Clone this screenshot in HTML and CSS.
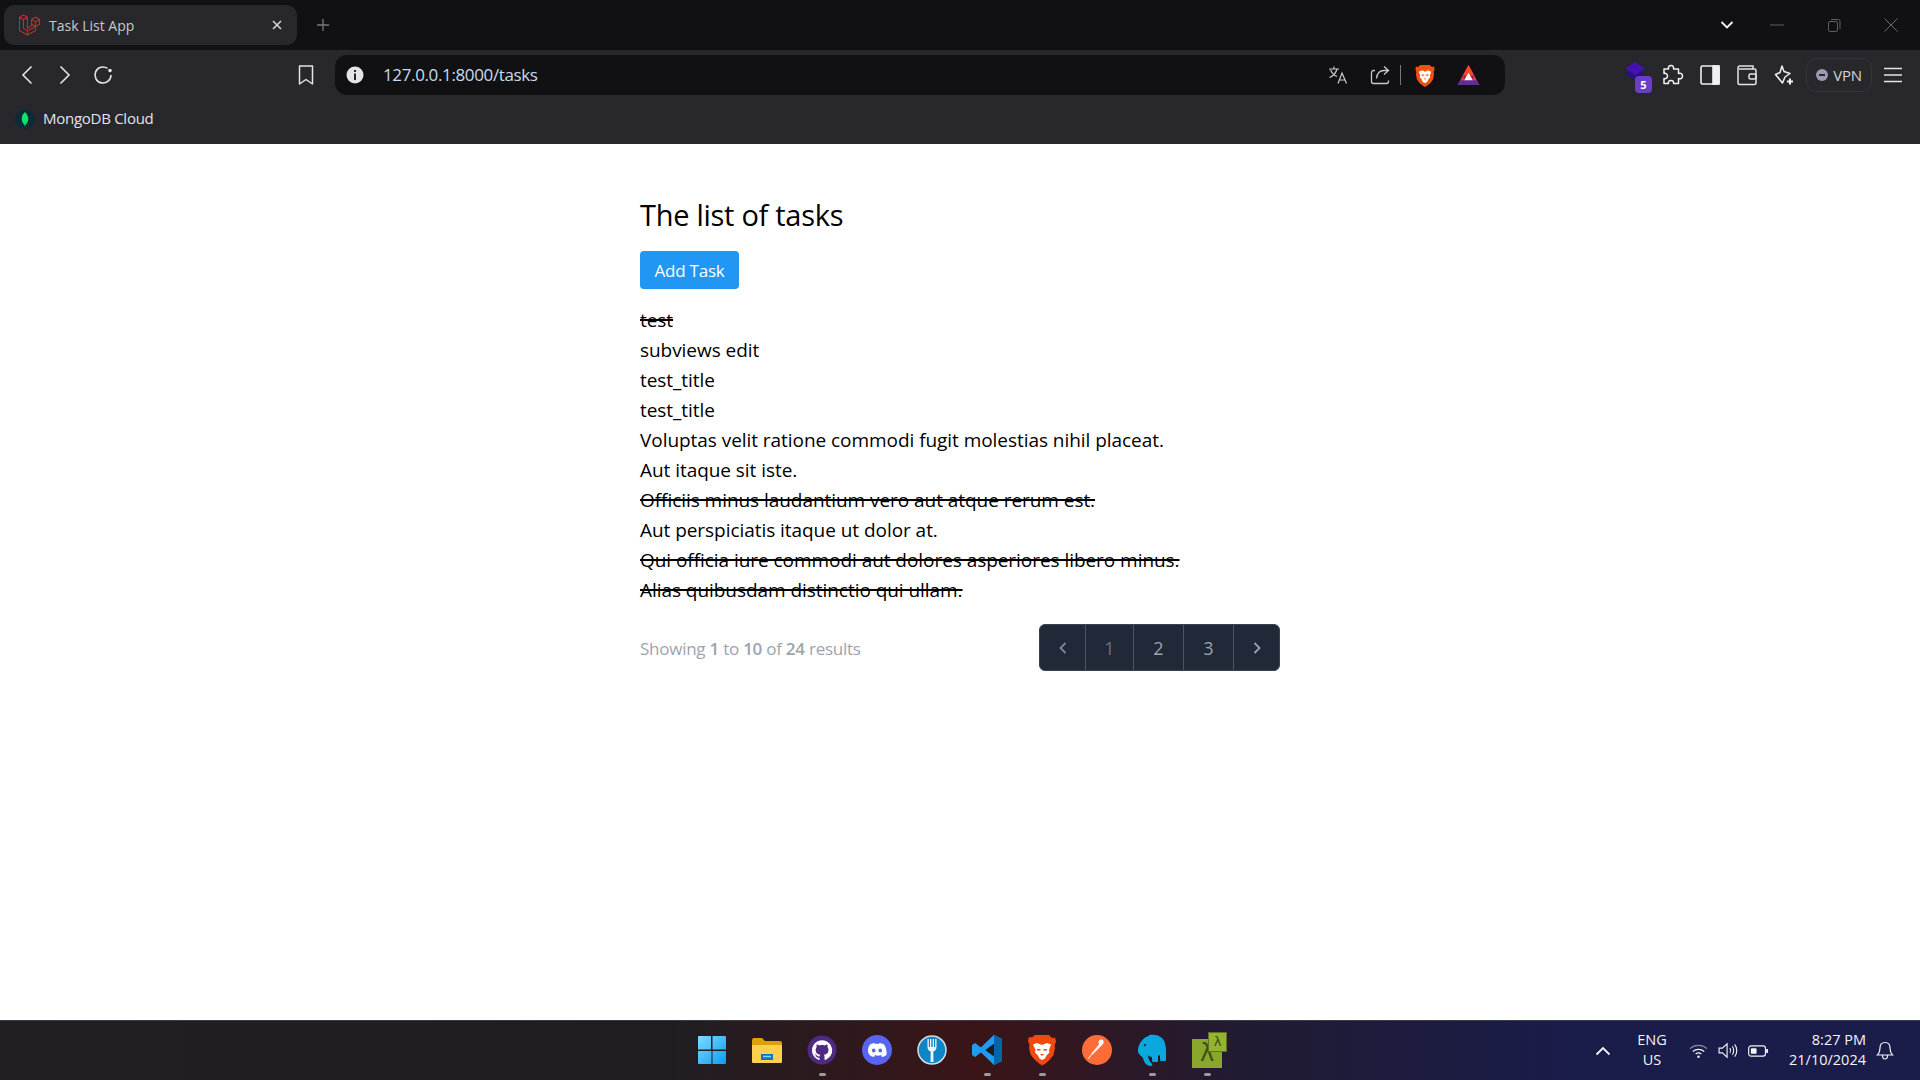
FILE: index.html
```html
<!DOCTYPE html>
<html lang="en">
<head>
    <meta charset="UTF-8">
    <meta name="viewport" content="width=device-width, initial-scale=1.0">
    <title>Task List App</title>
    <link rel="stylesheet" href="styles.css">
</head>
<body>
    <!-- Browser tabs -->
    <div class="tabstrip">
        <div class="tab">
            <svg class="favicon" viewBox="0 0 50 50" fill="none" stroke="#b8342b" stroke-width="2.6" stroke-linejoin="round">
                <path d="M1 6.5 10.500 1 20 6.500V32l10-5.500V12l9.500-5.500L49 12v11l-9.500 5.500V38L20 49 1 38zM1 6.500 10.500 12 20 6.500M10.500 12v21l9.500 5.500 19.500-10M20 38.500V49M30 12l9.500 5.500L49 12M39.500 17.500v11L30 23"/>
            </svg>
            <span class="tab-title">Task List App</span>
            <svg class="tab-close" viewBox="0 0 12 12" fill="none" stroke="#d4d4d8" stroke-width="1.6"><path d="M2 2l8 8M10 2l-8 8"/></svg>
        </div>
        <svg class="new-tab" viewBox="0 0 14 14" fill="none" stroke="#77777f" stroke-width="1.3"><path d="M7 1v12M1 7h12"/></svg>
        <div class="window-controls">
            <svg class="tab-list" viewBox="0 0 14 10" fill="none" stroke="#f4f4f5" stroke-width="1.8"><path d="M1.5 2 7 7.500 12.500 2"/></svg>
            <svg class="win-btn" viewBox="0 0 14 14" fill="none" stroke="#5c5c63"><path d="M0 7h14"/></svg>
            <svg class="win-btn" viewBox="0 0 14 14" fill="none" stroke="#5c5c63"><rect x="1.5" y="3.5" width="9" height="10" rx="1.5"/><path d="M4 1.500h7.500a1.500 1.500 0 0 1 1.500 1.500v8"/></svg>
            <svg class="win-btn" viewBox="0 0 14 14" fill="none" stroke="#6a6a71"><path d="M.5.5l13 13M13.500.5l-13 13"/></svg>
        </div>
    </div>

    <!-- Address bar -->
    <div class="toolbar">
        <div class="nav-btn"><svg class="icon" viewBox="0 0 20 20" fill="none" stroke="#e4e4e7" stroke-width="1.6"><path d="M14.500 1.500 6 10l8.500 8.500"/></svg></div>
        <div class="nav-btn"><svg class="icon" viewBox="0 0 20 20" fill="none" stroke="#e4e4e7" stroke-width="1.6"><path d="M5.500 1.500 14 10l-8.500 8.500"/></svg></div>
        <div class="nav-btn"><svg class="icon" viewBox="0 0 20 20" fill="none" stroke="#e4e4e7" stroke-width="1.6"><path d="M18 10a8 8 0 1 1-3.500-6.600"/><circle cx="17" cy="5.500" r="1.800" fill="#e4e4e7" stroke="none"/></svg></div>
        <svg class="bookmark" viewBox="0 0 16 20" fill="none" stroke="#e4e4e7" stroke-width="1.5"><path d="M1.500 1h13v18L8 14.500 1.500 19z" stroke-linejoin="round"/></svg>
        <div class="omnibox">
            <svg class="info" viewBox="0 0 18 18"><circle cx="9" cy="9" r="8.5" fill="#e4e4e7"/><path d="M8 4h2v2H8zM8 7.500h2V14H8z" fill="#26262b"/></svg>
            <span class="url">127.0.0.1:8000/tasks</span>
            <div class="omni-icons">
                <svg class="translate" viewBox="0 0 20 20" fill="none" stroke="#c9c9ce" stroke-width="1.2"><path d="M1 4h10M6 1.500V4M9 4c-1 4-4 7-7.500 8.500M2.500 5c1.500 3 4 5.500 6.500 6.500M10 18.500 14 8l4.500 10.500M11.500 15H17"/></svg>
                <svg class="share" viewBox="0 0 20 20" fill="none" stroke="#c9c9ce" stroke-width="1.3"><path d="M14 1.500l4.500 4-4.500 4M18 5.500h-4c-5 0-7 3.500-7.500 8M5 5.500H3.500a2 2 0 0 0-2 2v9a2 2 0 0 0 2 2h13a2 2 0 0 0 2-2v-1"/></svg>
                <span class="omni-sep"></span>
                <svg class="brave" viewBox="0 0 20 24"><path d="M5 1h10l2 2 2.500-.5.500 3-1 3 .5 2-1 5.500-3 4-3 2.500-2.500 1.500-2.500-1.500-3-2.500-3-4-1-5.500.5-2-1-3 .5-3L3 3z" fill="#f1500f"/><path d="M3.500 8 7 6.500l3 1.500 3-1.500L16.500 8 15 12l.5 2-2 2-1 2.500-2.500 1.500-2.500-1.500-1-2.500-2-2 .5-2z" fill="#fff"/><path d="M6.500 11h2.500v1.200H6.500zM11 11h2.500v1.200H11zM8.500 15h3L10 16.500z" fill="#f1500f"/></svg>
                <svg class="bat" viewBox="0 0 24 22"><path d="M12 0l11.500 21H.5z" fill="#9e1f63"/><path d="M12 0l6 11H6z" fill="#ff4724"/><path d="M6 11 .5 21h23L18 11l-1.500 4h-9z" fill="#662d91"/><path d="M12 8l4.500 8h-9z" fill="#fff"/><path d="M6 11l1.500 5H4zM18 11l-1.500 5H20z" fill="#e8442b"/></svg>
            </div>
        </div>
        <div class="toolbar-right">
            <div class="stack-ext">
                <svg class="stack" viewBox="0 0 22 22"><path d="M11 6l10 6-10 7-10-7z" fill="#27137a"/><path d="M11 0l10 6.500-10 7-10-7z" fill="#4412b0"/></svg>
                <span class="ext-badge">5</span>
            </div>
            <svg class="tool-icon" viewBox="0 0 22 22" fill="none" stroke="#f0f0f2" stroke-width="1.5" stroke-linejoin="round"><path d="M9 1.500c2 0 3 1.500 2.500 3.500h5v4.500c2.500-1 4 .5 4 2.500s-1.500 3.500-4 2.500v5h-5c.5-2-.5-3-2.500-3s-3 1-2.500 3H2v-5c2 .5 3.500-.5 3.500-2.500S4 9 2 9.500V5h4.500C6 3 7 1.500 9 1.500z"/></svg>
            <svg class="tool-icon" viewBox="0 0 22 22" fill="none" stroke="#f0f0f2" stroke-width="1.6"><rect x="2" y="2" width="18" height="18" rx="1.5"/><rect x="14" y="2" width="6" height="18" fill="#f0f0f2"/></svg>
            <svg class="tool-icon" viewBox="0 0 22 22" fill="none" stroke="#e4e4e7" stroke-width="1.5"><path d="M17 5V2H4a2 2 0 0 0-2 2v15a1.500 1.500 0 0 0 1.500 1.500h15A1.500 1.500 0 0 0 20 19V6.500A1.500 1.500 0 0 0 18.500 5H3"/><rect x="13" y="10" width="7" height="5" rx="1.5"/></svg>
            <svg class="tool-icon leo" viewBox="0 0 22 22"><path d="M9 2l2 5.500 6 2-5 3.500-2.500 6-7-8.500 4.500-2z" fill="none" stroke="#f0f0f2" stroke-width="1.5" stroke-linejoin="round"/><path d="M16 14.500h2v2h2v2h-2v2h-2v-2h-2v-2h2z" fill="#f0f0f2"/></svg>
            <div class="vpn">
                <span class="vpn-dot"></span>
                <span>VPN</span>
            </div>
            <svg class="menu-icon" viewBox="0 0 20 16" fill="none" stroke="#e4e4e7" stroke-width="1.5"><path d="M1 1.500h18M1 8h18M1 14.500h18"/></svg>
        </div>
    </div>

    <!-- Bookmarks -->
    <div class="bookmarks">
        <span class="mongo-icon">
            <svg viewBox="0 0 8 16"><path d="M4 0c2 2 3.500 4.500 3.500 7.500S5.500 13 4.500 13.500L4 16l-.5-2.500C2.500 13 .5 11 .5 7.500S2 2 4 0z" fill="#13e26a"/></svg>
        </span>
        <span class="bookmark-label">MongoDB Cloud</span>
    </div>

    <!-- Page -->
    <main class="page">
        <div class="content">
            <h1>The list of tasks</h1>
            <a class="add-task">Add Task</a>
            <ul class="task-list">
                <li class="done">test</li>
                <li>subviews edit</li>
                <li>test_title</li>
                <li>test_title</li>
                <li>Voluptas velit ratione commodi fugit molestias nihil placeat.</li>
                <li>Aut itaque sit iste.</li>
                <li class="done">Officiis minus laudantium vero aut atque rerum est.</li>
                <li>Aut perspiciatis itaque ut dolor at.</li>
                <li class="done">Qui officia iure commodi aut dolores asperiores libero minus.</li>
                <li class="done">Alias quibusdam distinctio qui ullam.</li>
            </ul>
            <div class="pager">
                <p class="summary">Showing <b>1</b> to <b>10</b> of <b>24</b> results</p>
                <div class="pages">
                    <span class="page-link arrow-prev"><svg class="chev" viewBox="0 0 10 14" fill="none" stroke="#7d8694" stroke-width="1.8"><path d="M7.500 2l-5 5 5 5"/></svg></span>
                    <span class="page-link current">1</span>
                    <span class="page-link num-2">2</span>
                    <span class="page-link num-3">3</span>
                    <span class="page-link arrow-next"><svg class="chev" viewBox="0 0 10 14" fill="none" stroke="#9ca3af" stroke-width="1.8"><path d="M2.500 2l5 5-5 5"/></svg></span>
                </div>
            </div>
        </div>
    </main>

    <!-- Windows taskbar -->
    <footer class="taskbar">
        <div class="task-side"></div>
        <div class="task-apps">
            <div class="app">
                <svg class="app-icon" viewBox="0 0 32 32"><defs><linearGradient id="win" x1="0" y1="0" x2="1" y2="1"><stop offset="0" stop-color="#7fdcff"/><stop offset="1" stop-color="#0a9cf0"/></linearGradient></defs><path d="M2 3a1 1 0 0 1 1-1h12v13.500H2zM16.500 2H29a1 1 0 0 1 1 1v12.500H16.500zM2 17h13.500v13H3a1 1 0 0 1-1-1zM16.500 17H30v12a1 1 0 0 1-1 1H16.500z" fill="url(#win)"/></svg>
            </div>
            <div class="app">
                <svg class="app-icon" viewBox="0 0 32 32"><path d="M1 6a2 2 0 0 1 2-2h8l3 3h15a2 2 0 0 1 2 2v4H1z" fill="#dba204"/><path d="M1 11h30v17a1 1 0 0 1-1 1H2a1 1 0 0 1-1-1z" fill="#fdd04f"/><path d="M10 20h12v6H10z" fill="#0f74c4"/><path d="M12 22.500h8" stroke="#8fd2ff" stroke-width="1.5"/></svg>
            </div>
            <div class="app running">
                <svg class="app-icon" viewBox="0 0 32 32"><circle cx="16" cy="16" r="14.5" fill="#4e2a83"/><g transform="translate(6 6) scale(.84)"><path d="M12 .297c-6.630 0-12 5.373-12 12 0 5.303 3.438 9.800 8.205 11.385.6.113.82-.258.82-.577 0-.285-.01-1.040-.015-2.040-3.338.724-4.042-1.610-4.042-1.610C4.422 18.070 3.633 17.700 3.633 17.700c-1.087-.744.084-.729.084-.729 1.205.084 1.838 1.236 1.838 1.236 1.070 1.835 2.809 1.305 3.495.998.108-.776.417-1.305.76-1.605-2.665-.3-5.466-1.332-5.466-5.930 0-1.310.465-2.380 1.235-3.220-.135-.303-.54-1.523.105-3.176 0 0 1.005-.322 3.300 1.230.96-.267 1.980-.399 3-.405 1.020.006 2.040.138 3 .405 2.280-1.552 3.285-1.230 3.285-1.230.645 1.653.24 2.873.12 3.176.765.84 1.230 1.910 1.230 3.220 0 4.610-2.805 5.625-5.475 5.920.42.36.81 1.096.81 2.220 0 1.606-.015 2.896-.015 3.286 0 .315.21.69.825.57C20.565 22.092 24 17.592 24 12.297c0-6.627-5.373-12-12-12" fill="#fff"/></g></svg>
            </div>
            <div class="app">
                <svg class="app-icon" viewBox="0 0 32 32"><circle cx="16" cy="16" r="15" fill="#5865f2"/><path d="M9 10.500c2-1 4-1.500 4.500-1.500l.5 1c1.300-.2 2.700-.2 4 0l.5-1c.5 0 2.500.5 4.500 1.500 2 3 3 6.500 2.500 10.500-1.500 1.200-3.500 2-4.500 2l-1-1.500c.7-.2 1.200-.5 1.700-.9-2.800 1.500-6.600 1.500-9.400 0 .5.4 1 .7 1.700.9l-1 1.500c-1 0-3-.8-4.500-2C6 17 7 13.500 9 10.500z" fill="#fff"/><ellipse cx="12.7" cy="16.5" rx="1.8" ry="2" fill="#5865f2"/><ellipse cx="19.3" cy="16.5" rx="1.8" ry="2" fill="#5865f2"/></svg>
            </div>
            <div class="app">
                <svg class="app-icon" viewBox="0 0 32 32"><circle cx="16" cy="16" r="14" fill="#0d86c6" stroke="#d7dde0" stroke-width="1.5"/><path d="M11.500 5v8c0 2.500 1.500 4 3.200 4.500L14.500 28h3l-.2-10.500c1.700-.5 3.200-2 3.200-4.500V5h-1.300v8h-1.200V5h-1.300v8h-1.400V5H14v8h-1.200V5z" fill="#f2f5f7"/></svg>
            </div>
            <div class="app running">
                <svg class="app-icon" viewBox="0 0 32 32"><path d="M23 1l8 4v22l-8 4-13-12.500-6 4.500-3-2V11l3-2 6 4.500z" fill="#1f9cf0"/><path d="M23 1l8 4v22l-8 4z" fill="#0065a9"/><path d="M23 9.500 14 16l9 6.500z" fill="#1a1c24"/><path d="M23 1 10 13.500l3.500 3L23 9.500z" fill="#1f9cf0"/></svg>
            </div>
            <div class="app running">
                <svg class="app-icon" viewBox="0 0 28 32"><path d="M7 1h14l3 3 3-.5 1 4-1.500 4 .5 2.500-1.500 7-4 5-4 3.500L14 31.500 10.500 29l-4-3.500-4-5-1.500-7 .5-2.500-1.500-4 1-4 3 .5z" fill="#ee4a10"/><path d="M5 10.500 9 9l5 2 5-2 4 1.500-2 5.500.5 2.500-3 3-1.500 3L14 26l-2.500-1.500-1.500-3-3-3 .5-2.500z" fill="#fff"/><path d="M9 15h3.500v1.500H9zM15.500 15H19v1.500h-3.500zM12 20h4l-2 2z" fill="#ee4a10"/></svg>
            </div>
            <div class="app">
                <svg class="app-icon" viewBox="0 0 32 32"><circle cx="16" cy="16" r="15" fill="#ff6c37"/><path d="M20 5.500a2.500 2.500 0 0 1 2.500 3.500l-1 1.500L11 21l-1-1 8-9.500-.5-2A2.500 2.500 0 0 1 20 5.500zM10.500 21.500 7.500 25l-.5-.5 2.500-3.500z" fill="#fff"/></svg>
            </div>
            <div class="app running">
                <svg class="app-icon" viewBox="0 0 32 32"><path d="M13 1c5-1 10 0 13 3 3 3 4 8 4 13v9c0 1-1 1-1.500 1H25c-1 0-1-1-1-2v-4l-2 1v5c0 1-1 1-1.500 1H17c-1 0-1-1-1-2v-3c-2 0-3-1-4-2 0 3 1 6 4 9 1 1 0 2-1 2-4 0-7-3-8-8-1-2-4-3-5-6-1-5 4-15 11-16z" fill="#0aa8de"/><circle cx="9" cy="11" r="1.2" fill="#05384d"/></svg>
            </div>
            <div class="app running">
                <div class="lambda-icon">
                    <span class="lambda-back">λ</span>
                    <span class="lambda-front">λ</span>
                </div>
            </div>
        </div>
        <div class="tray">
            <svg class="tray-chev" viewBox="0 0 16 10" fill="none" stroke="#f4f4f5" stroke-width="1.8"><path d="M1.500 8.500 8 2l6.500 6.500"/></svg>
            <div class="lang">ENG<br>US</div>
            <svg class="tray-wifi" viewBox="0 0 20 16" fill="none" stroke="#f4f4f5" stroke-width="1.3"><path d="M1 5.500c5-4.500 13-4.500 18 0" stroke="#8a8aa0"/><path d="M4 8.500c3.500-3 8.500-3 12 0"/><path d="M7 11.200c2-1.500 4-1.500 6 0"/><circle cx="10" cy="14" r="1.300" fill="#f4f4f5" stroke="none"/></svg>
            <svg class="tray-vol" viewBox="0 0 22 18" fill="none" stroke="#f4f4f5" stroke-width="1.2"><path d="M1 6.500h3.500l5-4.500v14l-5-4.500H1z"/><path d="M12.500 6.500c1 1.500 1 3.500 0 5M15 4.500c2 2.500 2 6.500 0 9M17.500 2.500c3 3.500 3 9.500 0 13"/></svg>
            <svg class="tray-batt" viewBox="0 0 22 14" fill="none" stroke="#f4f4f5" stroke-width="1.2"><rect x=".7" y="1.7" width="17.6" height="10.6" rx="2.5"/><rect x="3" y="4" width="6" height="6" rx="1" fill="#f4f4f5" stroke="none"/><path d="M20 5v4" stroke-width="2"/></svg>
            <div class="clock">8:27 PM<br>21/10/2024</div>
            <svg class="tray-bell" viewBox="0 0 18 20" fill="none" stroke="#f4f4f5" stroke-width="1.2"><path d="M9 1.500c-3.500 0-5 2.500-5 5.500 0 3-1 5.500-2.500 7h15c-1.500-1.500-2.500-4-2.500-7 0-3-1.500-5.500-5-5.500zM6.500 14.500c0 2 1 3.500 2.500 3.500s2.500-1.500 2.500-3.500"/></svg>
        </div>
    </footer>
</body>
</html>
```

FILE: styles.css
```css
* {
    box-sizing: border-box;
}

body {
    font-family: "Open Sans", "Noto Sans", sans-serif;
    background-color: #fff;
    margin: 0;
    padding: 0;
    height: 1080px;
    overflow: hidden;
    display: flex;
    flex-direction: column;
}

/* browser chrome */
.tabstrip {
    height: 50px;
    background-color: #111114;
    display: flex;
    align-items: center;
    padding-left: 4px;
    flex-shrink: 0;
}

.tab {
    width: 293px;
    height: 40px;
    background-color: #27272c;
    border-radius: 10px;
    display: flex;
    align-items: center;
    padding: 0 14px 0 15px;
}

.favicon {
    width: 21px;
    height: 22px;
    margin-right: 9px;
}

.tab-title {
    color: #c9c9ce;
    font-size: 14px;
    letter-spacing: 0;
    flex: 1;
}

.tab-close {
    width: 12px;
    height: 12px;
}

.new-tab {
    width: 14px;
    height: 14px;
    margin-left: 19px;
}

.window-controls {
    margin-left: auto;
    display: flex;
    align-items: center;
}

.tab-list {
    width: 14px;
    height: 10px;
    margin-right: 36px;
}

.win-btn {
    width: 14px;
    height: 14px;
    margin-right: 43px;
}

.win-btn:last-child {
    margin-right: 22px;
}

.toolbar {
    height: 50px;
    background-color: #27272c;
    display: flex;
    align-items: center;
    padding-left: 8px;
    flex-shrink: 0;
}

.nav-btn {
    width: 38px;
    display: flex;
    justify-content: center;
}

.icon {
    width: 20px;
    height: 20px;
}

.bookmark {
    width: 16px;
    height: 20px;
    margin-left: 176px;
}

.omnibox {
    width: 1170px;
    height: 40px;
    margin-left: 21px;
    background-color: #111114;
    border-radius: 12px;
    display: flex;
    align-items: center;
    padding-left: 11px;
}

.info {
    width: 18px;
    height: 18px;
}

.url {
    color: #c6dcef;
    font-size: 17px;
    letter-spacing: -.37px;
    margin-left: 19px;
    padding-bottom: 2px;
}

.omni-icons {
    margin-left: auto;
    display: flex;
    align-items: center;
    padding-right: 25px;
}

.translate {
    width: 20px;
    height: 20px;
}

.share {
    width: 20px;
    height: 20px;
    margin-left: 22px;
}

.omni-sep {
    width: 1px;
    height: 20px;
    background-color: #77777f;
    margin-left: 10px;
}

.brave {
    width: 20px;
    height: 23px;
    margin-left: 14px;
}

.bat {
    width: 23px;
    height: 21px;
    margin-left: 22px;
}

.toolbar-right {
    margin-left: 119px;
    display: flex;
    align-items: center;
}

.stack-ext {
    position: relative;
    width: 24px;
    height: 26px;
    margin-right: 14px;
}

.stack {
    width: 22px;
    height: 22px;
}

.ext-badge {
    position: absolute;
    right: -4px;
    bottom: -5px;
    width: 17px;
    height: 17px;
    background-color: #6b3fc4;
    border-radius: 4px;
    color: #fff;
    font-size: 11px;
    font-weight: 700;
    line-height: 17px;
    text-align: center;
}

.tool-icon {
    width: 22px;
    height: 22px;
    margin-right: 15px;
}

.tool-icon.leo {
    margin-right: 11px;
}

.vpn {
    width: 66px;
    height: 34px;
    border: 1px solid #34343b;
    border-radius: 10px;
    display: flex;
    align-items: center;
    justify-content: center;
    gap: 5px;
    color: #d4d4d8;
    font-size: 15px;
    letter-spacing: -.3px;
}

.vpn-dot {
    position: relative;
    width: 12px;
    height: 12px;
    border-radius: 50%;
    background-color: #9a9ab0;
}

.vpn-dot::after {
    content: "";
    position: absolute;
    left: 3px;
    right: 3px;
    top: 5px;
    height: 2px;
    background-color: #27272c;
}

.menu-icon {
    width: 20px;
    height: 16px;
    margin-left: 11px;
}

.bookmarks {
    height: 44px;
    background-color: #27272c;
    display: flex;
    align-items: center;
    padding: 0 0 6px 15px;
    flex-shrink: 0;
}

.mongo-icon {
    width: 20px;
    height: 20px;
    background-color: #0b2c36;
    border-radius: 50%;
    display: flex;
    align-items: center;
    justify-content: center;
}

.mongo-icon svg {
    width: 8px;
    height: 15px;
}

.bookmark-label {
    color: #e4e4e7;
    font-size: 15px;
    letter-spacing: -.27px;
    margin-left: 8px;
    padding-bottom: 2px;
}

/* page */
.page {
    flex: 1;
    display: flex;
    justify-content: center;
    background-color: #fff;
}

.content {
    width: 640px;
    padding-top: 51px;
}

h1 {
    font-size: 29px;
    font-weight: 400;
    line-height: 40px;
    letter-spacing: -.28px;
    color: #000;
    margin: 0 0 16px;
}

.add-task {
    display: block;
    width: 99px;
    height: 38px;
    background-color: #2196f3;
    border-radius: 4px;
    color: #fff;
    font-size: 17px;
    line-height: 40px;
    letter-spacing: -.2px;
    text-align: center;
    margin-bottom: 16px;
}

.task-list {
    list-style: none;
    margin: 0 0 19px;
    padding: 0;
    font-size: 19px;
    line-height: 30px;
    letter-spacing: -.05px;
    color: #000;
}

.done {
    text-decoration: line-through;
    text-decoration-thickness: 2px;
}

.pager {
    display: flex;
    justify-content: space-between;
    align-items: center;
}

.summary {
    margin: 0;
    padding-top: 2px;
    color: #9ca3af;
    font-size: 17px;
    letter-spacing: -.25px;
}

.summary b {
    font-weight: 600;
}

.pages {
    display: flex;
    height: 47px;
    background-color: #1f2937;
    border: 1px solid #374151;
    border-radius: 6px;
}

.page-link {
    display: flex;
    align-items: center;
    justify-content: center;
    color: #9ca3af;
    font-size: 18px;
    border-left: 1px solid #4b5563;
}

.arrow-prev {
    width: 45px;
    border-left: none;
}

.current {
    width: 48px;
    color: #6b7280;
}

.num-2 {
    width: 50px;
}

.num-3 {
    width: 50px;
}

.arrow-next {
    width: 46px;
}

.chev {
    width: 10px;
    height: 14px;
}

/* taskbar */
.taskbar {
    height: 60px;
    border-top: 1px solid #3b3b45;
    background: linear-gradient(90deg, #211f24 0%, #201d22 35%, #3a1518 51%, #201b33 65%, #1a1c4a 82%, #1a1c4a 100%);
    display: grid;
    grid-template-columns: 1fr auto 1fr;
    align-items: center;
    flex-shrink: 0;
}

.task-apps {
    display: flex;
}

.app {
    position: relative;
    width: 55px;
    height: 59px;
    display: flex;
    align-items: center;
    justify-content: center;
    padding: 0 2px 2px 0;
}

.app.running::after {
    content: "";
    position: absolute;
    left: 24px;
    bottom: 4px;
    width: 7px;
    height: 3px;
    border-radius: 2px;
    background-color: #9b9ba2;
}

.app-icon {
    width: 32px;
    height: 32px;
}

.lambda-icon {
    position: relative;
    width: 35px;
    height: 36px;
    margin-left: 6px;
}

.lambda-back,
.lambda-front {
    position: absolute;
    display: flex;
    align-items: center;
    justify-content: center;
    font-family: "DejaVu Sans", sans-serif;
    color: #3f4f16;
}

.lambda-back {
    left: 0;
    bottom: 0;
    width: 30px;
    height: 29px;
    background-color: #8aa62c;
    font-size: 24px;
}

.lambda-front {
    right: 0;
    top: 0;
    width: 19px;
    height: 20px;
    background-color: #94b332;
    border: 1px solid #5d7322;
    font-size: 13px;
}

.tray {
    display: flex;
    align-items: center;
    justify-content: flex-end;
    color: #f4f4f5;
}

.tray-chev {
    width: 16px;
    height: 10px;
    margin-right: 21px;
}

.lang {
    width: 40px;
    font-size: 14.5px;
    line-height: 20px;
    text-align: center;
    margin-right: 17px;
    padding-bottom: 2px;
}

.tray-wifi {
    width: 19px;
    height: 16px;
    margin-right: 10px;
}

.tray-vol {
    width: 21px;
    height: 17px;
    margin-right: 9px;
}

.tray-batt {
    width: 21px;
    height: 14px;
    margin-right: 20px;
}

.clock {
    font-size: 14.5px;
    line-height: 20px;
    text-align: right;
    margin-right: 10px;
    padding-bottom: 2px;
}

.tray-bell {
    width: 18px;
    height: 20px;
    margin-right: 26px;
}
```
